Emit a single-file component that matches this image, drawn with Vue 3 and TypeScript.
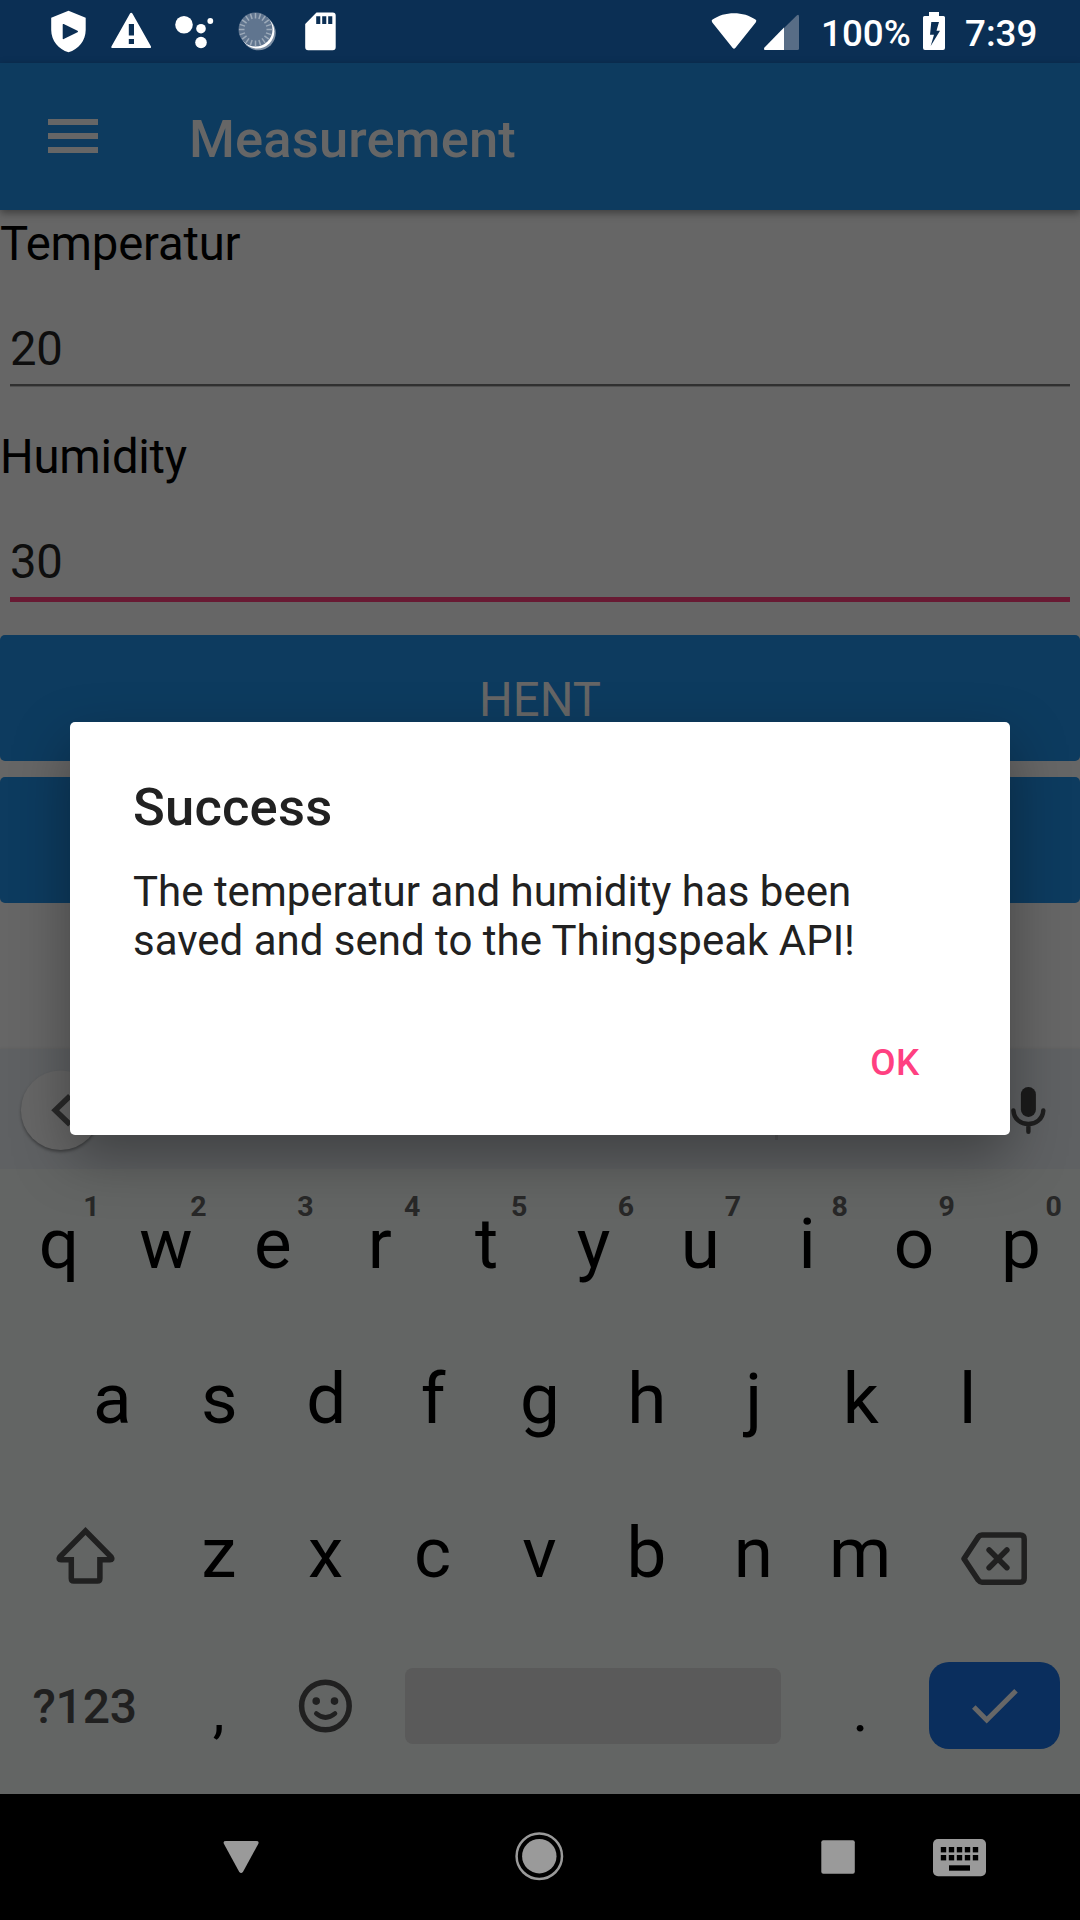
<script setup lang="ts">
interface Key {
  label: string
  hint?: string
}

interface Field {
  label: string
  value: string
  focused: boolean
}

const fields: Field[] = [
  { label: 'Temperatur', value: '20', focused: false },
  { label: 'Humidity', value: '30', focused: true },
]

const topRow: Key[] = [...'qwertyuiop'].map((label, i) => ({ label, hint: String((i + 1) % 10) }))
const homeRow: string[] = [...'asdfghjkl']
const bottomRow: string[] = [...'zxcvbnm']

const ticks: number[] = Array.from({ length: 20 }, (_, i) => i * 18)
const padCols: number[] = [0, 1, 2, 3, 4]
</script>

<template>
  <div class="screen">
    <header class="status">
      <div class="notifications">
        <svg viewBox="37 0 63 63"><path fill="#fff" fill-rule="evenodd" d="M68.5 10.8L85.7 17.8V30C85.7 40.500 78.500 49.500 68.500 52.200C58.500 49.500 51.200 40.500 51.200 30V17.800ZM62.700 24.500V38.500Q62.700 39.500 63.700 39L77.500 32.200Q78.700 31.500 77.500 30.800L63.700 24Q62.700 23.600 62.700 24.500Z" /></svg>
        <svg viewBox="100 0 63 63"><path fill="#fff" fill-rule="evenodd" d="M130 13.500Q131.200 12 132.400 13.500L151 46.500Q151.500 48 150 48H112.300Q110.700 48 111.400 46.500ZM128.800 24V35.500H134V24ZM128.800 39V44H134V39Z" /></svg>
        <svg viewBox="163 0 63 63" fill="#fff"><circle cx="184" cy="24.700" r="8.800" /><circle cx="201" cy="28.700" r="4.800" /><circle cx="210.300" cy="21" r="2.900" /><circle cx="201" cy="42.500" r="5.800" /></svg>
        <svg viewBox="226 0 63 63">
          <circle cx="258.500" cy="33" r="17.300" fill="#7e90a5" />
          <circle cx="257.300" cy="31.500" r="17" fill="#fff" />
          <circle cx="255.500" cy="29.500" r="17" fill="#60758f" />
          <path v-for="a in ticks" :key="a" d="M255.500 13V18.500" stroke="#9dabba" stroke-width="1.500" :transform="`rotate(${a} 255.500 29.500)`" />
        </svg>
        <svg viewBox="289 0 63 63"><path fill="#fff" fill-rule="evenodd" d="M316.500 12.600H332.700Q335.700 12.600 335.700 15.600V47.300Q335.700 50.300 332.700 50.300H308.200Q305.200 50.300 305.200 47.300V24ZM316.200 16.300V24H320.300V16.300ZM322.200 16.300V24H326.300V16.300ZM328.200 16.300V24H332.300V16.300Z" /></svg>
      </div>
      <div class="system">
        <svg class="wifi" viewBox="706 0 56 63"><path fill="#fff" d="M712.300 22.500Q710.800 20.800 712.500 19.600C724 11 744 11 755.500 19.600Q757.200 20.800 755.700 22.500L735.300 48Q734 49.500 732.700 48Z" /></svg>
        <svg class="cell" viewBox="762 0 40 63"><path fill="#586d86" d="M784 28L797 15.200Q799 14 799 16.500V48.500Q799 50 797.500 50H784Z" /><path fill="#fff" d="M784 27.500V50H765Q763.200 49.500 764.500 47.500Z" /></svg>
        <span class="percent">100%</span>
        <svg class="battery" viewBox="920 0 28 63"><path fill="#fff" fill-rule="evenodd" d="M929 12H939V16H943.500Q945 16 945 17.500V48Q945 50 943 50H925Q923 50 923 48V17.500Q923 16 924.500 16H929ZM931.300 22L930 34.700H934L930.700 46L940 30.700H936.500L939 22Z" /></svg>
        <span class="clock">7:39</span>
      </div>
    </header>

    <div class="toolbar">
      <div class="burger"><i></i><i></i><i></i></div>
      <h1>Measurement</h1>
    </div>

    <main class="content">
      <section class="form">
        <div v-for="f in fields" :key="f.label" class="group">
          <label>{{ f.label }}</label>
          <div class="entry" :class="{ focused: f.focused }">{{ f.value }}</div>
        </div>
      </section>
      <button class="action">HENT</button>
      <button class="action"></button>
    </main>

    <section class="keyboard">
      <div class="strip">
        <svg width="110" height="120" viewBox="0 1049 110 120">
          <circle class="chip" cx="60.600" cy="1110.300" r="39.700" fill="#666" />
          <path d="M70 1096L55.200 1110.300L70 1124.500" fill="none" stroke="#292929" stroke-width="5.500" />
        </svg>
        <i class="divider"></i>
        <svg width="100" height="120" viewBox="980 1049 100 120">
          <rect x="1020.900" y="1087" width="15" height="30" rx="7.400" fill="#1b1b1b" />
          <path d="M1013.400 1110.500C1014.500 1128.500 1042.200 1128.500 1043.300 1110.500M1028.400 1124V1131.700" fill="none" stroke="#1f1f1f" stroke-width="4.400" stroke-linecap="round" />
        </svg>
      </div>

      <div class="row">
        <div v-for="k in topRow" :key="k.label" class="key">{{ k.label }}<sup>{{ k.hint }}</sup></div>
      </div>
      <div class="row">
        <div v-for="k in homeRow" :key="k" class="key">{{ k }}</div>
      </div>
      <div class="row lower">
        <svg class="wide" viewBox="5.500 1478 159.500 154.500">
          <path d="M85 1531L59.300 1557Q57.500 1559.700 60.500 1559.700H70.800V1578.500Q70.800 1581 73.300 1581H96.900Q99.400 1581 99.400 1578.500V1559.700H109.500Q112.500 1559.700 110.700 1557Z" fill="none" stroke="#202020" stroke-width="5.500" />
        </svg>
        <div v-for="k in bottomRow" :key="k" class="key">{{ k }}</div>
        <svg class="wide" viewBox="913.500 1478 159.500 154.500">
          <path d="M963.500 1558.700L977.800 1537Q979.300 1535 981.500 1535H1019.700Q1023.700 1535 1023.700 1539V1578.200Q1023.700 1582.200 1019.700 1582.200H981.500Q979.300 1582.200 977.800 1580.200ZM988.600 1550L1006.400 1567.700M1006.400 1550L988.600 1567.700" fill="none" stroke="#202020" stroke-width="5.500" stroke-linecap="round" stroke-linejoin="round" />
        </svg>
      </div>
      <div class="row">
        <div class="mode">?123</div>
        <div class="key punct">,</div>
        <svg class="slot" viewBox="272 1632.500 107 154.500" fill="#202020">
          <circle cx="325.400" cy="1705.500" r="23.800" fill="none" stroke="#202020" stroke-width="5.500" />
          <circle cx="316.200" cy="1700.600" r="3.800" /><circle cx="334.500" cy="1700.600" r="3.800" />
          <path d="M316.300 1713Q325.400 1721 335 1713" fill="none" stroke="#202020" stroke-width="4.600" stroke-linecap="round" />
        </svg>
        <div class="space"></div>
        <div class="key punct">.</div>
        <div class="enter">
          <svg width="131" height="87" viewBox="929 1662 131 87"><path d="M973.800 1707L986.700 1720L1016 1690.700" fill="none" stroke="#676767" stroke-width="5" /></svg>
        </div>
      </div>
    </section>

    <nav class="navbar">
      <svg width="1080" height="126" viewBox="0 1794 1080 126" fill="#9a9a9a">
        <path d="M226 1841H256.200Q259.700 1841 258.200 1844L243.200 1871.500Q241.100 1874.500 239 1871.500L224 1844Q222.500 1841 226 1841Z" />
        <circle cx="539.300" cy="1856.200" r="17.200" />
        <circle cx="539.300" cy="1856.200" r="22.700" fill="none" stroke="#9a9a9a" stroke-width="2.500" />
        <rect x="821.300" y="1840.300" width="33.500" height="33.500" rx="2" />
        <rect x="933" y="1839" width="53" height="37.200" rx="5" />
        <g fill="#000">
          <template v-for="c in padCols" :key="c">
            <rect :x="940.800 + c * 8" y="1847" width="5.400" height="5.400" />
            <rect :x="940.800 + c * 8" y="1855" width="5.400" height="5.400" />
          </template>
          <rect x="949" y="1865.300" width="21" height="5.400" />
        </g>
      </svg>
    </nav>

    <div class="dialog">
      <h2>Success</h2>
      <p>The temperatur and humidity has been saved and send to the Thingspeak API!</p>
      <button class="ok">OK</button>
    </div>
  </div>
</template>

<style>
body {
  margin: 0;
}
</style>

<style scoped>
.screen {
  position: relative;
  width: 1080px;
  height: 1920px;
  overflow: hidden;
  display: flex;
  flex-direction: column;
  background: #666;
  color: #000;
  font-family: Roboto, "Liberation Sans", sans-serif;
}
svg {
  display: block;
  flex: none;
}
button {
  border: 0;
  padding: 0;
  font-family: inherit;
}
.status {
  flex: none;
  height: 63px;
  display: flex;
  justify-content: space-between;
  background: #0b2f54;
  color: #fff;
}
.notifications {
  display: flex;
  padding-left: 37px;
}
.notifications svg {
  width: 63px;
  height: 63px;
}
.system {
  display: flex;
  width: 374px;
  font-size: 36.75px;
  font-weight: 500;
  line-height: 67.5px;
}
.wifi {
  width: 56px;
  height: 63px;
}
.cell {
  width: 40px;
  height: 63px;
}
.percent {
  width: 99px;
  margin-left: 19px;
}
.battery {
  width: 28px;
  height: 63px;
}
.clock {
  margin-left: 17px;
}
.toolbar {
  position: relative;
  flex: none;
  height: 147px;
  box-sizing: border-box;
  display: flex;
  padding-left: 48px;
  background: #0d3b5f;
  box-shadow: 0 3px 8px rgba(0, 0, 0, 0.4);
}
.burger {
  width: 50px;
  padding-top: 56px;
  display: flex;
  flex-direction: column;
  gap: 8px;
}
.burger i {
  height: 6px;
  background: #666;
}
h1 {
  margin: 0 0 0 91px;
  font-size: 52.5px;
  font-weight: 500;
  line-height: 152px;
  letter-spacing: 0.15px;
  color: #666;
}
.content {
  flex: none;
  height: 839px;
  display: flex;
  flex-direction: column;
}
.form {
  height: 425px;
}
.group {
  height: 213px;
  font-size: 47.25px;
  letter-spacing: -0.2px;
}
.group label {
  display: block;
  padding-top: 7px;
  line-height: 55px;
}
.entry {
  margin: 0 10px;
  height: 112px;
  box-sizing: border-box;
  padding-top: 49px;
  line-height: 56px;
  color: #0e0e0e;
  box-shadow: 0 2px #303030, 0 3px #505050;
}
.entry.focused {
  box-shadow: 0 5px #681a33;
}
.action {
  flex: none;
  height: 126px;
  margin-bottom: 16px;
  border-radius: 5px;
  background: #0d3b5f;
  color: #666;
  font-size: 47.25px;
  line-height: 126px;
}
.action:first-of-type {
  padding-top: 2px;
}
.keyboard {
  position: relative;
  flex: none;
  height: 745px;
  background: #636564;
  box-shadow: 0 -1px 2px rgba(0, 0, 0, 0.06);
}
.strip {
  height: 120px;
  display: flex;
  background: #5f6163;
}
.chip {
  filter: drop-shadow(0 2px 1.5px rgba(0, 0, 0, 0.35));
}
.divider {
  width: 3px;
  height: 60px;
  margin: 31px 202px 0 665px;
  background: #555658;
}
.row {
  height: 154.5px;
  display: flex;
  justify-content: center;
}
.row.lower {
  padding-right: 1px;
}
.key {
  position: relative;
  width: 106.9px;
  font-size: 71px;
  line-height: 149px;
  text-align: center;
}
.key.punct {
  font-size: 60px;
  line-height: 156px;
}
.key sup {
  position: absolute;
  left: 76px;
  width: 20px;
  top: 19.5px;
  font-size: 28.5px;
  font-weight: 700;
  line-height: 36px;
  text-align: center;
  color: #282828;
}
.wide {
  width: 159.5px;
  height: 154.5px;
}
.slot {
  width: 107px;
  height: 154.5px;
}
.mode {
  box-sizing: border-box;
  width: 159px;
  padding-right: 2px;
  font-size: 48px;
  font-weight: 500;
  line-height: 148px;
  text-align: center;
  letter-spacing: -0.2px;
  color: #202020;
}
.space {
  width: 376px;
  height: 76px;
  margin: 35.5px 26px 0;
  border-radius: 8px;
  background: #5a5a5a;
}
.enter {
  width: 131px;
  height: 87px;
  margin: 29.5px 14px 0 15px;
  border-radius: 20px;
  background: #0a2e5d;
}
.navbar {
  position: relative;
  flex: none;
  height: 126px;
  background: #000;
}
.dialog {
  position: absolute;
  left: 70px;
  top: 722px;
  width: 940px;
  height: 413px;
  box-sizing: border-box;
  padding: 49px 63px 0;
  display: flex;
  flex-direction: column;
  border-radius: 5px;
  background: #fff;
  color: #212121;
  box-shadow: 0 22px 56px rgba(0, 0, 0, 0.34);
}
h2 {
  margin: 0;
  font-size: 52.5px;
  font-weight: 500;
  line-height: 72px;
  letter-spacing: 0.2px;
}
p {
  margin: 24px 0 0;
  font-size: 42px;
  line-height: 49px;
}
.ok {
  align-self: flex-end;
  margin: 76px 27.5px 0 0;
  background: none;
  color: #ff4081;
  font-size: 36.75px;
  font-weight: 500;
  line-height: 44px;
  letter-spacing: 0.3px;
}
</style>
